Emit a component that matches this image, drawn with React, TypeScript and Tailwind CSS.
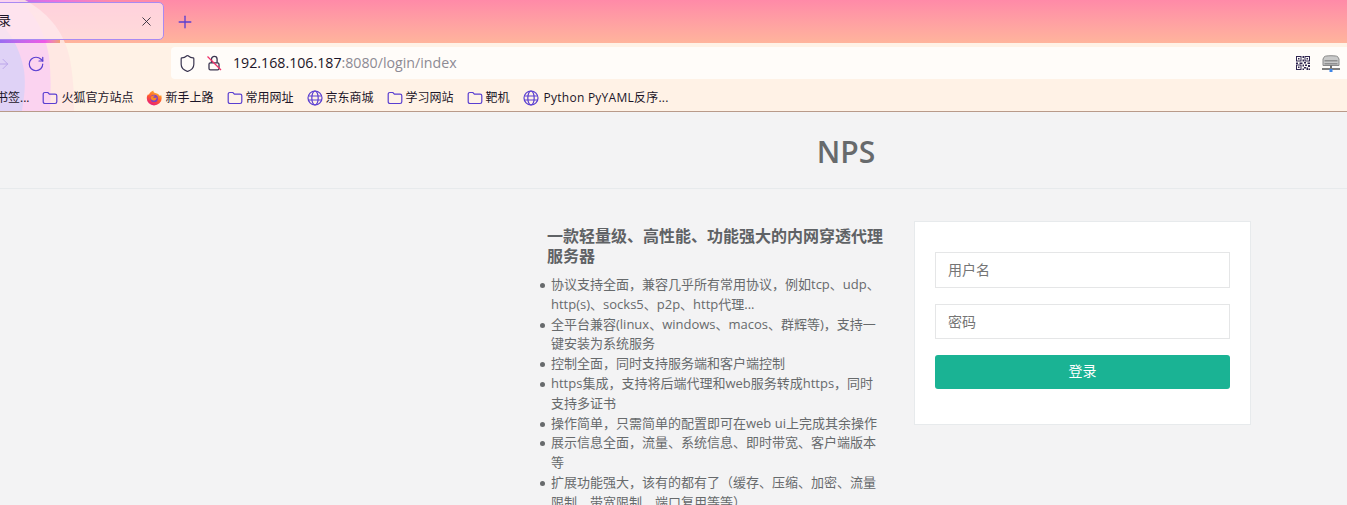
import { Shield, X, Plus, RotateCw, ArrowRight } from "lucide-react";

const CJK = "font-['Open_Sans','Noto_Sans_CJK_SC',sans-serif]";

const FEATURES = [
  "协议支持全面，兼容几乎所有常用协议，例如tcp、udp、http(s)、socks5、p2p、http代理...",
  "全平台兼容(linux、windows、macos、群辉等)，支持一键安装为系统服务",
  "控制全面，同时支持服务端和客户端控制",
  "https集成，支持将后端代理和web服务转成https，同时支持多证书",
  "操作简单，只需简单的配置即可在web ui上完成其余操作",
  "展示信息全面，流量、系统信息、即时带宽、客户端版本等",
  "扩展功能强大，该有的都有了（缓存、压缩、加密、流量限制、带宽限制、端口复用等等）",
];

function FolderIcon() {
  return (
    <svg width="16" height="16" viewBox="0 0 16 16" fill="none" stroke="#5a3fd1" strokeWidth="1.2" className="shrink-0">
      <path d="M1.2 4.2c0-1 .7-1.7 1.7-1.7h3l1.5 1.6h5.700c1 0 1.700.7 1.700 1.700v6c0 1-.7 1.700-1.700 1.700H2.900c-1 0-1.700-.7-1.700-1.700z" />
    </svg>
  );
}

function GlobeIcon() {
  return (
    <svg width="16" height="16" viewBox="0 0 16 16" fill="none" stroke="#5a3fd1" strokeWidth="1.2" className="shrink-0">
      <circle cx="8" cy="8" r="7" />
      <ellipse cx="8" cy="8" rx="3.2" ry="7" />
      <path d="M1.2 6h13.600M1.200 10h13.600" />
    </svg>
  );
}

function FirefoxIcon() {
  return (
    <svg width="16" height="16" viewBox="0 0 16 16" className="shrink-0">
      <defs>
        <linearGradient id="fx" x1="0.7" y1="0" x2="0.2" y2="1">
          <stop offset="0" stopColor="#ffbd2e" />
          <stop offset="0.5" stopColor="#ff5a2c" />
          <stop offset="1" stopColor="#e31587" />
        </linearGradient>
      </defs>
      <path d="M8 15.500A7.200 7.200 0 0 1 .8 8.200c0-1.600.5-3 1.400-4.200l.6 1.200C3.500 3 5.200 1.500 7.500.6c-.3 1 .2 1.700 1 2.200 2 .5 4.500 1.200 5.400 3.200.5-.2.9-.5 1.200-1 .4 1 .6 2 .6 3.200A7.700 7.300 0 0 1 8 15.500z" fill="url(#fx)" />
      <circle cx="8.200" cy="8.400" r="3.700" fill="#7b3fc8" />
      <path d="M4.800 7c1-1.500 3.500-2 5-.8-1.500-.2-2.400.3-2.700 1 .8.900 2.400.6 3.700.2-.2 2-1.800 3.300-3.600 3.100C5.500 10.300 4.300 8.600 4.800 7z" fill="#ff8a1f" />
    </svg>
  );
}

function BrokenLockIcon() {
  return (
    <svg width="16" height="16" viewBox="0 0 16 16" fill="none" className="shrink-0">
      <path d="M3 9.200c0-.8.600-1.400 1.400-1.400h7.200c.8 0 1.400.6 1.400 1.400v4.200c0 .8-.6 1.400-1.400 1.400H4.400c-.8 0-1.400-.6-1.400-1.400z" stroke="#3a3550" strokeWidth="1.300" />
      <path d="M5.500 7.800V4.200a2.800 2.800 0 0 1 5.600 0v3.600" stroke="#3a3550" strokeWidth="1.300" />
      <path d="M1.500 1.500l13.500 13.500" stroke="#f0306a" strokeWidth="1.300" />
    </svg>
  );
}

function QrIcon() {
  return (
    <svg width="14" height="14" viewBox="0 0 14 14" fill="#2f2550" className="shrink-0">
      <path fillRule="evenodd" d="M0 0h5.500v5.500H0zM1 1v3.500h3.500V1zM8.500 0H14v5.500H8.500zM9.500 1v3.500H13V1zM0 8.500h5.500V14H0zM1 9.500V13h3.500V9.500z" />
      <path d="M2 2h1.500v1.500H2zM10.500 2H12v1.500h-1.500zM2 10.500h1.500V12H2zM6.500 0H8v2H6.500zM6.500 3.500H8v2H6.500zM0 6.500h2V8H0zM3.500 6.500h3V8h-3zM8 6h2v1.500H8zM11.500 6.500H14V8h-2.500zM6.500 8.500H8v2H6.500zM9 8.500h2V10H9zM12 9h2v2h-2zM8 11h2v1.500H8zM6.500 12.500H8V14H6.500zM10.500 11.500H12V14h-1.500zM12.500 12.500H14V14h-1.500z" />
    </svg>
  );
}

function ServerIcon() {
  return (
    <svg width="18" height="17" viewBox="0 0 18 17" className="shrink-0">
      <path d="M2.500 1.500C4 .5 14 .5 15.500 1.500L17 4v6.500H1V4z" fill="#c9c9c9" stroke="#8a8a8a" />
      <path d="M2.500 5h13v1.500h-13zM2.500 8h13v1.500h-13z" fill="#8f8f8f" />
      <path d="M0 13h18v2H0z" fill="#7f7f7f" />
      <path d="M8 10.500h2V13H8z" fill="#6f6f6f" />
      <path d="M7.500 14h3v3h-3z" fill="#3f86e8" />
    </svg>
  );
}

function Bookmark({ icon, label, labelClass = "" }: { icon: React.ReactNode; label: string; labelClass?: string }) {
  return (
    <div className="flex items-center gap-[3px]">
      {icon}
      <span className={`whitespace-nowrap ${labelClass}`}>{label}</span>
    </div>
  );
}

function BrowserChrome() {
  return (
    <div className={`relative h-[112px] bg-[#fff2e6] border-b border-[#b89a8a] overflow-hidden ${CJK}`}>
      {/* Tab strip */}
      <div className="h-[43px] bg-gradient-to-b from-[#ff8aa8] to-[#ffb49c]" />
      <div className="absolute left-0 top-0 w-[110px] h-[2px] bg-gradient-to-r from-[#b070f0] via-[#e870e0] to-[#ff8aa8]" />

      {/* Theme swirl */}
      <svg className="absolute left-0 top-0 pointer-events-none" width="90" height="111" viewBox="0 0 90 111">
        <path d="M25 0C46 12 62 28 69 55c4 18 5 37 5 56H0V0z" fill="#ffe6e2" fillOpacity="0.85" />
        <path d="M18 0C34 12 44 30 49 56c2 18 2 36 1 55H0V0z" fill="#fbd3f0" />
        <path d="M0 24C10 32 20 48 24 70c2 16 0 28-2 41H0z" fill="#dfd2f6" />
      </svg>

      {/* Tab */}
      <div className="absolute left-[-22px] top-[2px] w-[186px] h-[38px] flex items-center justify-between pl-[6px] pr-[9px] rounded-[5px] border border-[#a98af2] bg-[#ffe8ee]/75 text-[13px] text-[#1c1528]">
        <span>登录</span>
        <X size={15} strokeWidth={1.4} color="#2c2735" />
      </div>
      <div className="absolute left-0 top-[40px] w-[60px] h-[3px] bg-gradient-to-r from-[#9a6cf0] via-[#ef58e6] via-[75%] to-[#f0a070]" />
      <Plus size={20} strokeWidth={1.6} color="#5a3fd1" className="absolute left-[175px] top-[12px]" />

      {/* Nav bar */}
      <div className="absolute left-0 right-0 top-[43px] h-[36px] flex items-center">
        <ArrowRight size={16} strokeWidth={1.4} color="#b9a3ea" className="ml-[-5px] mt-[5px] shrink-0" />
        <RotateCw size={18} strokeWidth={1.6} color="#5a3fd1" className="ml-[16px] mt-[5px] shrink-0" />
        <div className="ml-[126px] flex-1 h-[32px] mt-[4px] bg-[#fffcf9] rounded-l-[4px] flex items-center pl-[7px]">
          <Shield size={19} strokeWidth={1.5} color="#3a3550" />
          <div className="ml-[9px]">
            <BrokenLockIcon />
          </div>
          <span className="ml-[11px] text-[14.200px] leading-none text-[#1c1528]">
            192.168.106.187<span className="text-[#8d8a94]">:8080/login/index</span>
          </span>
          <div className="ml-auto flex items-center gap-[12px] pr-[7px]">
            <QrIcon />
            <ServerIcon />
          </div>
        </div>
      </div>

      {/* Bookmarks */}
      <div className="absolute left-[-4px] top-[82px] h-[32px] flex items-center gap-[13px] text-[12px] text-[#1c1528]">
        <span className="whitespace-nowrap">书签...</span>
        <Bookmark icon={<FolderIcon />} label="火狐官方站点" />
        <Bookmark icon={<FirefoxIcon />} label="新手上路" />
        <Bookmark icon={<FolderIcon />} label="常用网址" />
        <Bookmark icon={<GlobeIcon />} label="京东商城" />
        <Bookmark icon={<FolderIcon />} label="学习网站" />
        <Bookmark icon={<FolderIcon />} label="靶机" />
        <Bookmark icon={<GlobeIcon />} label="Python PyYAML反序..." labelClass="ml-[2px] tracking-[0.25px]" />
      </div>
    </div>
  );
}

function LoginCard() {
  return (
    <div className="w-[337px] h-[204px] bg-white border border-[#e7eaec] px-[20px] pt-[30px]">
      <input
        placeholder="用户名"
        className="block w-full h-[36px] border border-[#e5e6e7] px-[12px] pb-[2px] text-[14px] outline-none placeholder:text-[#757575]"
      />
      <input
        placeholder="密码"
        className="block w-full h-[35px] mt-[16px] border border-[#e5e6e7] px-[12px] text-[14px] outline-none placeholder:text-[#757575]"
      />
      <button className="block w-full h-[34px] mt-[16px] pb-[3px] rounded-[3px] bg-[#1ab394] text-white text-[14px]">登录</button>
    </div>
  );
}

export default function App() {
  return (
    <div className={`h-[505px] w-[1347px] overflow-hidden bg-[#f3f3f4] text-[#676a6c] ${CJK}`}>
      <BrowserChrome />

      <div className="h-[77px] border-b border-[#e7eaec] pl-[532px] flex items-center">
        <h1 className="w-[628px] text-center text-[30px] font-semibold leading-none pt-[3px]">NPS</h1>
      </div>

      <div className="ml-[547px] mt-[32px] flex gap-[30px]">
        <div className="w-[337px] pt-[5px]">
          <h2 className="text-[16px] leading-[20px] font-bold text-[#5f6265]">一款轻量级、高性能、功能强大的内网穿透代理服务器</h2>
          <ul className="mt-[9px] text-[13px] leading-[19.800px] pl-[4px]">
            {FEATURES.map((text) => (
              <li key={text} className="list-none relative before:content-[''] before:absolute before:left-[-11px] before:top-[8px] before:w-[5px] before:h-[5px] before:rounded-full before:bg-[#676a6c]">
                {text}
              </li>
            ))}
          </ul>
        </div>
        <LoginCard />
      </div>
    </div>
  );
}
